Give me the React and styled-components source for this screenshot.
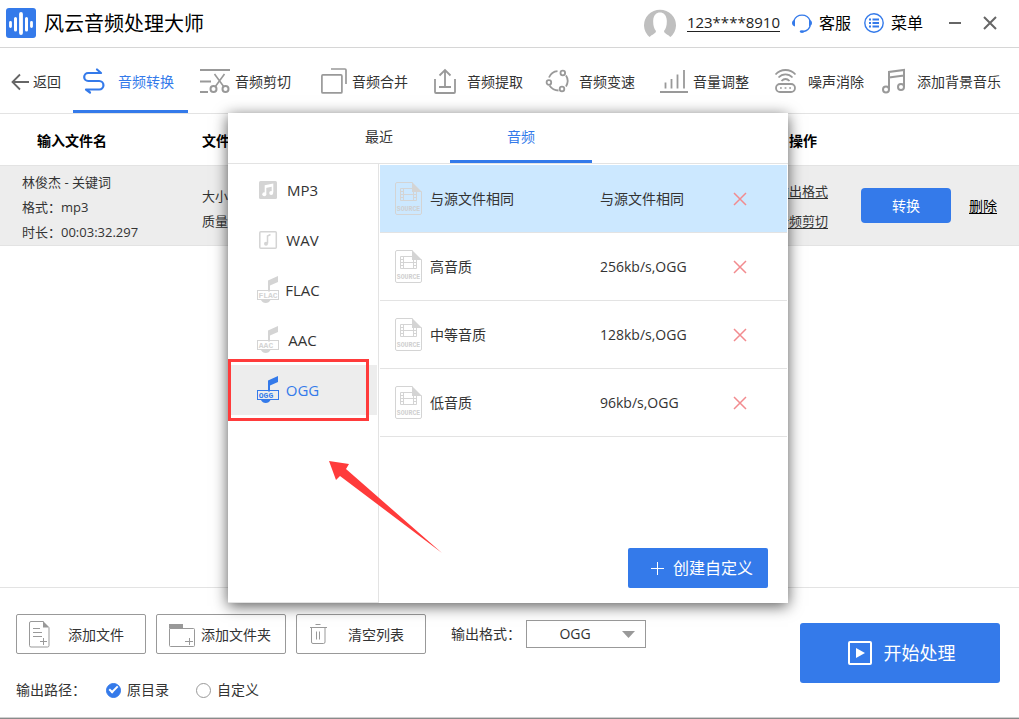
import React, { useState } from "react";
import styled, { createGlobalStyle, css } from "styled-components";

const blue = "#347aea";
const line = "#e3e3e3";
const grey = "#999";

const GlobalStyle = createGlobalStyle`
  *, *::before, *::after { box-sizing: border-box; }
  body {
    margin: 0;
    background: #fff;
    color: #333;
    font: 14px/20px "Open Sans", "Noto Sans CJK SC", sans-serif;
  }
  button, select, input { font: inherit; color: inherit; margin: 0; }
  button { border: 0; padding: 0; background: none; cursor: pointer; }
  svg { display: block; flex: none; }
`;

const Window = styled.div`
  position: relative;
  display: flex;
  flex-direction: column;
  min-height: 100vh;
  border-bottom: 1px solid #8a8a8a;
`;

/* ---------- title bar ---------- */
const TitleBar = styled.header`
  display: flex;
  align-items: center;
  height: 48px;
  padding: 0 22px 2px 6px;
  border-bottom: 1px solid #d6d6d6;
  color: #000;
`;
const AppName = styled.h1`
  flex: 1;
  margin: 0 0 0 8px;
  padding-top: 2px;
  font-size: 20px;
  line-height: 28px;
  font-weight: 400;
`;
const Account = styled.a`
  display: flex;
  align-items: center;
  gap: 11px;
  margin-right: 12px;
  font-size: 15px;
  color: #222;
  text-decoration: none;
  span { border-bottom: 1px solid #222; line-height: 18px; }
`;
const TitleAction = styled.button`
  display: flex;
  align-items: center;
  gap: 7px;
  margin-right: 13px;
  font-size: 16px;
`;
const WindowControls = styled.div`
  display: flex;
  gap: 21px;
  margin-left: 12px;
`;
const ControlButton = styled.button`
  width: 14px;
  height: 14px;
`;

/* ---------- tool tabs ---------- */
const ToolBar = styled.nav`
  display: flex;
  height: 66px;
  border-bottom: 1px solid ${line};
`;
const BackButton = styled.button`
  display: flex;
  align-items: center;
  gap: 4px;
  width: 73px;
  padding: 3px 0 0 11px;
`;
const ToolTabs = styled.div`
  flex: 1;
  display: grid;
  grid-template-columns: 117fr 117fr 115fr 112fr 114fr 115fr 109fr 147fr;
`;
const ToolTab = styled.button`
  display: flex;
  align-items: center;
  gap: 5px;
  margin-right: 2px;
  padding: 3px 0 0 10px;
  border-bottom: 3px solid ${(p) => (p.$active ? blue : "transparent")};
  color: ${(p) => (p.$active ? blue : "#333")};
  white-space: nowrap;
  span { padding-top: 2px; }
`;

/* ---------- file table ---------- */
const Main = styled.main`
  flex: 1;
`;
const FileTable = styled.table`
  width: 100%;
  table-layout: fixed;
  border-collapse: separate;
  border-spacing: 0;
`;
const Col = styled.col`
  width: ${(p) => p.$width}px;
`;
const HeadCell = styled.th`
  height: 51px;
  padding: 2px 0 0 ${(p) => p.$inset}px;
  text-align: left;
  font-weight: 700;
  color: #000;
`;
const Cell = styled.td`
  height: 81px;
  padding: ${(p) => p.$top || 0}px 0 0 ${(p) => p.$inset || 0}px;
  background: #ededed;
  border-top: 1px solid #e3e3e3;
  border-bottom: 1px solid #e3e3e3;
  font-size: 13px;
  line-height: 25px;
`;
const RowActions = styled.div`
  display: flex;
  align-items: center;
`;
const LinkStack = styled.div`
  display: flex;
  flex-direction: column;
  gap: 10px;
  margin-right: 33px;
  line-height: 20px;
`;
const TextLink = styled.a`
  color: ${(p) => (p.$strong ? "#000" : "#333")};
  font-size: ${(p) => (p.$strong ? 14 : 13)}px;
  text-underline-offset: 2px;
`;
const ConvertButton = styled.button`
  width: 90px;
  height: 35px;
  margin-right: 18px;
  border-radius: 4px;
  background: ${blue};
  color: #fff;
  font-size: 14px;
`;

/* ---------- footer ---------- */
const Footer = styled.footer`
  display: flex;
  align-items: center;
  justify-content: space-between;
  padding-right: 19px;
  border-top: 1px solid ${line};
  border-bottom: 1px solid #d0d0d0;
`;
const FooterOptions = styled.div`
  padding: 26px 0 17px 16px;
`;
const FooterRow = styled.div`
  display: flex;
  align-items: center;
  gap: 10px;
`;
const OutlineButton = styled.button`
  display: flex;
  align-items: center;
  width: 130px;
  height: 40px;
  padding: 0 8px;
  border: 1px solid ${grey};
  border-radius: 2px;
  background: #fff;
  span { flex: 1; padding-top: 2px; text-align: center; }
`;
const SelectLabel = styled.label`
  display: flex;
  align-items: center;
  gap: 5px;
  margin-left: 15px;
`;
const SelectBox = styled.div`
  display: grid;
  align-items: center;
  width: 120px;
  > * { grid-area: 1 / 1; }
  > svg { justify-self: end; margin-right: 11px; pointer-events: none; }
`;
const FormatSelect = styled.select`
  appearance: none;
  height: 28px;
  padding: 0 22px 0 0;
  border: 1px solid ${grey};
  border-radius: 0;
  background: #fff;
  text-align: center;
  text-align-last: center;
`;
const PathRow = styled.fieldset`
  display: flex;
  align-items: center;
  margin: 26px 0 0;
  padding: 0;
  border: 0;
`;
const PathTitle = styled.span`
  width: 90px;
`;
const RadioLabel = styled.label`
  display: flex;
  align-items: center;
  gap: 6px;
  width: 90px;
`;
const Radio = styled.input`
  appearance: none;
  display: grid;
  place-items: center;
  width: 15px;
  height: 15px;
  border: 1px solid ${grey};
  border-radius: 50%;
  background: #fff;
  &:checked { background: ${blue}; border-color: ${blue}; }
  &:checked::after {
    content: "";
    width: 9px;
    height: 5px;
    margin-bottom: 3px;
    border: solid #fff;
    border-width: 0 0 2px 2px;
    transform: rotate(-45deg);
  }
`;
const StartButton = styled.button`
  display: flex;
  align-items: center;
  justify-content: center;
  gap: 12px;
  width: 200px;
  height: 60px;
  padding-left: 3px;
  border-radius: 3px;
  background: ${blue};
  color: #fff;
  font-size: 18px;
`;

/* ---------- format popup ---------- */
const Popup = styled.section`
  position: absolute;
  left: 228px;
  top: 113px;
  display: flex;
  flex-direction: column;
  width: 560px;
  height: 490px;
  background: #fff;
  box-shadow: 0 3px 14px rgba(0, 0, 0, 0.65);
`;
const PopupTabs = styled.div`
  display: flex;
  height: 51px;
  padding-left: 80px;
  border-bottom: 1px solid ${line};
`;
const PopupTab = styled.button`
  width: 142px;
  border-bottom: 3px solid ${(p) => (p.$active ? blue : "transparent")};
  color: ${(p) => (p.$active ? blue : "#333")};
`;
const PopupBody = styled.div`
  flex: 1;
  display: flex;
`;
const FormatList = styled.div`
  width: 151px;
  padding: 1px 1px 0;
  border-right: 1px solid ${line};
  border-bottom: 1px solid ${line};
`;
const FormatItem = styled.button`
  display: flex;
  align-items: center;
  width: 100%;
  height: 50px;
  padding-left: 27px;
  font-size: 15px;
  color: #333;
  ${(p) =>
    p.$active &&
    css`
      background: #ededed;
      color: ${blue};
    `}
  svg { color: ${(p) => (p.$active ? blue : "#d4d4d4")}; }
  span { width: 45px; text-align: center; }
`;
const PresetPane = styled.div`
  flex: 1;
  display: flex;
  flex-direction: column;
  justify-content: space-between;
  align-items: flex-end;
  padding: 1px 1px 15px;
`;
const Presets = styled.ul`
  width: 100%;
  margin: 0;
  padding: 0;
  list-style: none;
`;
const Preset = styled.li`
  display: grid;
  grid-template-columns: 35px 170px 133px 14px;
  align-items: center;
  height: 68px;
  padding-left: 15px;
  border-bottom: 1px solid ${line};
  background: ${(p) => (p.$active ? "#cce8ff" : "#fff")};
  span { padding-top: 1px; }
`;
const CreateButton = styled.button`
  display: flex;
  align-items: center;
  gap: 9px;
  width: 140px;
  height: 40px;
  margin-right: 19px;
  padding-left: 23px;
  border-radius: 2px;
  background: ${blue};
  color: #fff;
  font-size: 16px;
`;

/* ---------- tutorial marks over the popup ---------- */
const Highlight = styled.div`
  position: absolute;
  left: 0;
  top: 246px;
  width: 141px;
  height: 62px;
  border: 3px solid #ff3b3b;
  pointer-events: none;
`;
const Pointer = styled.svg`
  position: absolute;
  left: 101px;
  top: 346px;
  pointer-events: none;
`;

/* ---------- drawings ---------- */
const Draw = ({ w, h = w, color = "currentColor", sw = 2, children }) => (
  <svg width={w} height={h} viewBox={`0 0 ${w} ${h}`} fill="none" stroke={color} strokeWidth={sw} aria-hidden="true">
    {children}
  </svg>
);

const Logo = () => (
  <svg width="30" height="30" viewBox="0 0 30 30" aria-hidden="true">
    <rect width="30" height="30" rx="3" fill={blue} />
    <g stroke="#fff" strokeLinecap="round">
      <path d="M4.500 14.500v4M25.500 14.500v4" strokeWidth="2.800" />
      <path d="M9.500 10.500v11.500M20.500 10.500v11.500" strokeWidth="3" />
      <path d="M15 6v19" strokeWidth="3.800" />
    </g>
  </svg>
);
const Avatar = () => (
  <svg width="32" height="32" viewBox="0 0 32 32" aria-hidden="true">
    <path
      fill="#bfbfbf"
      d="M5.500 30A16 15.500 0 1 1 26.500 30C24 27.500 20 26.500 20 24C22 22 23 18 22.800 13.500C22.500 8 19.500 5.500 16 5.500S9.500 8 9.200 13.500C9 18 10 22 12 24C12 26.500 8 27.500 5.500 30Z"
    />
  </svg>
);
const Headset = () => (
  <Draw w={20} color={blue} sw={1.3}>
    <path d="M2 7.500A8.600 8.600 0 0 1 18 7.500M18.300 12.500C17.500 15.500 15 17.800 11.500 18.500" />
    <path d="M3 6.500v7C1.200 13 0 11.800 0 10S1.200 7 3 6.500ZM17 6.500v7c1.800-.5 3-1.700 3-3.500S18.800 7 17 6.500Z" fill={blue} stroke="none" />
    <ellipse cx="10" cy="18.600" rx="2.300" ry="1.400" fill={blue} stroke="none" />
  </Draw>
);
const MenuIcon = () => (
  <Draw w={20} color={blue} sw={1.4}>
    <circle cx="10" cy="10" r="9.200" />
    <path d="M5 6.500h2M5 10h2M5 13.500h2M8.500 6.500H15M8.500 10H15M8.500 13.500H15" strokeWidth="1.800" />
  </Draw>
);

const toolIcons = {
  convert: (
    <g strokeWidth="2.200" strokeLinecap="round" strokeLinejoin="round">
      <path d="M14 3.500l4 3.500H5.200a4 4 0 0 0 0 8h11a4 4 0 0 1 0 8.500H3l4 3" />
    </g>
  ),
  cut: (
    <g>
      <path d="M0 4h30M0 15.500h11M0 26h8" strokeWidth="1.800" />
      <path d="M14.500 8l9.500 13M24.500 8l-9.500 13" strokeWidth="1.600" />
      <circle cx="13.500" cy="23" r="3" />
      <circle cx="25.500" cy="23" r="3" />
    </g>
  ),
  merge: (
    <g strokeWidth="1.700">
      <rect x="4.900" y="8.900" width="20" height="18" rx="1" />
      <path d="M14 3h14q1 0 1 1v14" />
    </g>
  ),
  extract: (
    <g strokeWidth="1.800">
      <path d="M3 13v13q0 1 1 1h18q1 0 1-1V13" />
      <path d="M13 20V4.500M7.500 9.500L13 4l5.500 5.500M7 21h12" />
    </g>
  ),
  speed: (
    <g strokeWidth="1.800">
      <path d="M5 11.500C6.500 8 9.500 5.500 13.500 5.200M22 9.500C24 12.500 24 17 22 20.500M14.500 24.500C10.500 24.500 7.500 22.500 5.500 19.500" />
      <circle cx="18.800" cy="7" r="2.300" />
      <circle cx="4.900" cy="16.500" r="2.300" />
      <circle cx="18" cy="23" r="2.300" />
    </g>
  ),
  volume: <path d="M2 26h28M7.500 22.500v-6M13.500 22.500V13M19.500 22.500V8.500M26 22.500V4" strokeWidth="1.800" />,
  noise: (
    <g strokeWidth="1.800">
      <rect x="3" y="18" width="19" height="8" rx="4" />
      <path d="M2.500 8.500C8 2.500 17 2.500 22.500 8.500M5.500 11.500C9.500 7.300 15.500 7.300 19.500 11.500M8.500 15C11 12.300 14 12.300 16.500 15" />
      <path d="M7 22h1.800M11.600 22h1.800M16.200 22H18" strokeWidth="1.600" />
    </g>
  ),
  music: (
    <g strokeWidth="2">
      <circle cx="4" cy="23.500" r="3" />
      <circle cx="19" cy="21" r="3" />
      <path d="M7 23.500V6L22 4v17M7 11.500L22 9.500" />
    </g>
  ),
};

const TaggedNote = ({ tag }) => (
  <svg width="24" height="30" viewBox="0 0 24 30" aria-hidden="true">
    <path d="M12 5.500L22 1v6L14 10.500v6h-2z" fill="currentColor" />
    <path d="M5 25h9.500Q13 28 9.700 28T5 25Z" fill="currentColor" />
    <rect x="1.500" y="15.500" width="21" height="9" fill="none" stroke="currentColor" />
    <text x={tag === "FLAC" ? 12 : 10} y="23" textAnchor="middle" fontFamily="Liberation Mono" fontWeight="700" fontSize="8" fill="currentColor">
      {tag}
    </text>
  </svg>
);
const SquareNote = ({ solid }) => (
  <svg width="24" height="30" viewBox="0 0 24 30" aria-hidden="true">
    {solid ? (
      <g>
        <rect x="3" y="6" width="18" height="18" rx="1.500" fill="currentColor" />
        <path d="M9.500 19V11L16.500 9.500v8" fill="none" stroke="#fff" strokeWidth="1.600" />
        <path d="M9.500 12L16.500 10.500" stroke="#fff" strokeWidth="2.200" />
        <circle cx="8.300" cy="19.200" r="2" fill="#fff" />
        <circle cx="15.200" cy="18" r="2" fill="#fff" />
      </g>
    ) : (
      <g>
        <rect x="3.800" y="6.800" width="16.500" height="16.500" rx="1" fill="none" stroke="currentColor" strokeWidth="1.500" />
        <path d="M11.500 18.500V11l3-1.500" fill="none" stroke="currentColor" strokeWidth="1.500" />
        <circle cx="10" cy="18.800" r="2" fill="currentColor" />
      </g>
    )}
  </svg>
);
const SourceFile = () => (
  <svg width="27" height="33" viewBox="0 0 27 33" aria-hidden="true">
    <g fill="none" stroke="#d4d4d4">
      <path d="M17.500 .5H2Q.5 .5 .5 2v29q0 1.500 1.500 1.500h23q1.500 0 1.500-1.500V9.500" />
      <path d="M5.500 6.500h16v12h-16zM8.500 6.500v12M18.500 6.500v12M8.500 12.500h10M5.500 9.500h3M5.500 12.500h3M5.500 15.500h3M18.500 9.500h3M18.500 12.500h3M18.500 15.500h3" />
    </g>
    <path d="M17 0l10 10H17z" fill="#d4d4d4" />
    <text x="13.500" y="29" textAnchor="middle" fontFamily="Liberation Mono" fontWeight="700" fontSize="6.500" fill="#cfcfcf">
      SOURCE
    </text>
  </svg>
);

const tools = [
  ["convert", "音频转换"],
  ["cut", "音频剪切"],
  ["merge", "音频合并"],
  ["extract", "音频提取"],
  ["speed", "音频变速"],
  ["volume", "音量调整"],
  ["noise", "噪声消除"],
  ["music", "添加背景音乐"],
];
const formats = ["MP3", "WAV", "FLAC", "AAC", "OGG"];
const presets = [
  ["与源文件相同", "与源文件相同"],
  ["高音质", "256kb/s,OGG"],
  ["中等音质", "128kb/s,OGG"],
  ["低音质", "96kb/s,OGG"],
];

function FormatIcon({ name }) {
  if (name === "MP3") return <SquareNote solid />;
  if (name === "WAV") return <SquareNote />;
  return <TaggedNote tag={name} />;
}

function FormatPopup({ format, onFormat }) {
  const [preset, setPreset] = useState(0);
  return (
    <Popup aria-label="输出格式">
      <PopupTabs>
        <PopupTab>最近</PopupTab>
        <PopupTab $active>音频</PopupTab>
      </PopupTabs>
      <PopupBody>
        <FormatList>
          {formats.map((f) => (
            <FormatItem key={f} $active={f === format} onClick={() => onFormat(f)}>
              <FormatIcon name={f} />
              <span>{f}</span>
            </FormatItem>
          ))}
        </FormatList>
        <PresetPane>
          <Presets>
            {presets.map(([name, detail], i) => (
              <Preset key={name} $active={i === preset} onClick={() => setPreset(i)}>
                <SourceFile />
                <span>{name}</span>
                <span>{detail}</span>
                <ControlButton aria-label="删除">
                  <Draw w={14} color="#f28b8f" sw={1.5}>
                    <path d="M1 1l12 12M13 1L1 13" />
                  </Draw>
                </ControlButton>
              </Preset>
            ))}
          </Presets>
          <CreateButton>
            <Draw w={13} sw={1}>
              <path d="M6.500 0v13M0 6.500h13" />
            </Draw>
            创建自定义
          </CreateButton>
        </PresetPane>
      </PopupBody>
      <Highlight />
      <Pointer width="116" height="96" viewBox="0 0 116 96" aria-hidden="true">
        <path d="M0 2L20 5L17 10L113 94L11 17L7 21Z" fill="#ff3b3b" />
      </Pointer>
    </Popup>
  );
}

export default function App() {
  const [format, setFormat] = useState("OGG");
  return (
    <Window>
      <GlobalStyle />
      <TitleBar>
        <Logo />
        <AppName>风云音频处理大师</AppName>
        <Account href="#account">
          <Avatar />
          <span>123****8910</span>
        </Account>
        <TitleAction>
          <Headset />
          客服
        </TitleAction>
        <TitleAction>
          <MenuIcon />
          菜单
        </TitleAction>
        <WindowControls>
          <ControlButton aria-label="最小化">
            <Draw w={14} color="#666">
              <path d="M1 7h12" />
            </Draw>
          </ControlButton>
          <ControlButton aria-label="关闭">
            <Draw w={14} color="#666">
              <path d="M1 1l12 12M13 1L1 13" />
            </Draw>
          </ControlButton>
        </WindowControls>
      </TitleBar>

      <ToolBar>
        <BackButton>
          <Draw w={18} color="#666" sw={1.8}>
            <path d="M18 9H1.500M9 1.500L1.500 9L9 16.500" />
          </Draw>
          返回
        </BackButton>
        <ToolTabs>
          {tools.map(([icon, label], i) => (
            <ToolTab key={icon} $active={i === 0}>
              <Draw w={30} color={i === 0 ? blue : grey}>
                {toolIcons[icon]}
              </Draw>
              <span>{label}</span>
            </ToolTab>
          ))}
        </ToolTabs>
      </ToolBar>

      <Main>
        <FileTable>
          <colgroup>
            <Col $width={202} />
            <col />
            <Col $width={243} />
          </colgroup>
          <thead>
            <tr>
              <HeadCell $inset={37}>输入文件名</HeadCell>
              <HeadCell $inset={0}>文件</HeadCell>
              <HeadCell $inset={13}>操作</HeadCell>
            </tr>
          </thead>
          <tbody>
            <tr>
              <Cell $inset={22} $top={4}>
                林俊杰 - 关键词
                <br />
                格式：mp3
                <br />
                时长：00:03:32.297
              </Cell>
              <Cell $top={6}>
                大小
                <br />
                质量
              </Cell>
              <Cell>
                <RowActions>
                  <LinkStack>
                    <TextLink href="#format">输出格式</TextLink>
                    <TextLink href="#cut">音频剪切</TextLink>
                  </LinkStack>
                  <ConvertButton>转换</ConvertButton>
                  <TextLink $strong href="#remove">
                    删除
                  </TextLink>
                </RowActions>
              </Cell>
            </tr>
          </tbody>
        </FileTable>
      </Main>

      <Footer>
        <FooterOptions>
          <FooterRow>
            <OutlineButton>
              <Draw w={30} color={grey} sw={1}>
                <path d="M18.500 2.500H6q-1.500 0-1.500 1.500v22.500q0 1.500 1.500 1.500h16.500q1.500 0 1.500-1.500V8.500M8 9.500h7M8 13.500h9M8 17.500h9M15 22.500h7M18.500 19v7" />
                <path d="M18 2l6.500 6.500H18z" fill={grey} stroke="none" />
              </Draw>
              <span>添加文件</span>
            </OutlineButton>
            <OutlineButton>
              <Draw w={30} color={grey} sw={1}>
                <path d="M4.500 9.500h24q1 0 1 1v16q0 1-1 1h-23q-1 0-1-1zM20 22.500h8M24.500 19v7" />
                <path d="M4 5h14v4H4z" fill={grey} stroke="none" />
              </Draw>
              <span>添加文件夹</span>
            </OutlineButton>
            <OutlineButton>
              <Draw w={30} color={grey} sw={1}>
                <path d="M5 8.500h17M10.500 5.500h5M6.500 8.500V23q0 1.500 1.500 1.500h10.500q1.500 0 1.500-1.500V8.500M11.500 12.500v8M14.500 12.500v8" />
              </Draw>
              <span>清空列表</span>
            </OutlineButton>
            <SelectLabel>
              输出格式：
              <SelectBox>
                <FormatSelect value={format} onChange={(e) => setFormat(e.target.value)}>
                  {formats.map((f) => (
                    <option key={f}>{f}</option>
                  ))}
                </FormatSelect>
                <svg width="13" height="7" viewBox="0 0 13 7" aria-hidden="true">
                  <path d="M0 0h13L6.500 7z" fill={grey} />
                </svg>
              </SelectBox>
            </SelectLabel>
          </FooterRow>
          <PathRow>
            <PathTitle>输出路径：</PathTitle>
            <RadioLabel>
              <Radio type="radio" name="path" defaultChecked />
              原目录
            </RadioLabel>
            <RadioLabel>
              <Radio type="radio" name="path" />
              自定义
            </RadioLabel>
          </PathRow>
        </FooterOptions>
        <StartButton>
          <Draw w={24}>
            <rect x="1" y="1" width="22" height="22" rx="1" />
            <path d="M8 7l9 5l-9 5z" fill="#fff" stroke="none" />
          </Draw>
          开始处理
        </StartButton>
      </Footer>

      <FormatPopup format={format} onFormat={setFormat} />
    </Window>
  );
}
